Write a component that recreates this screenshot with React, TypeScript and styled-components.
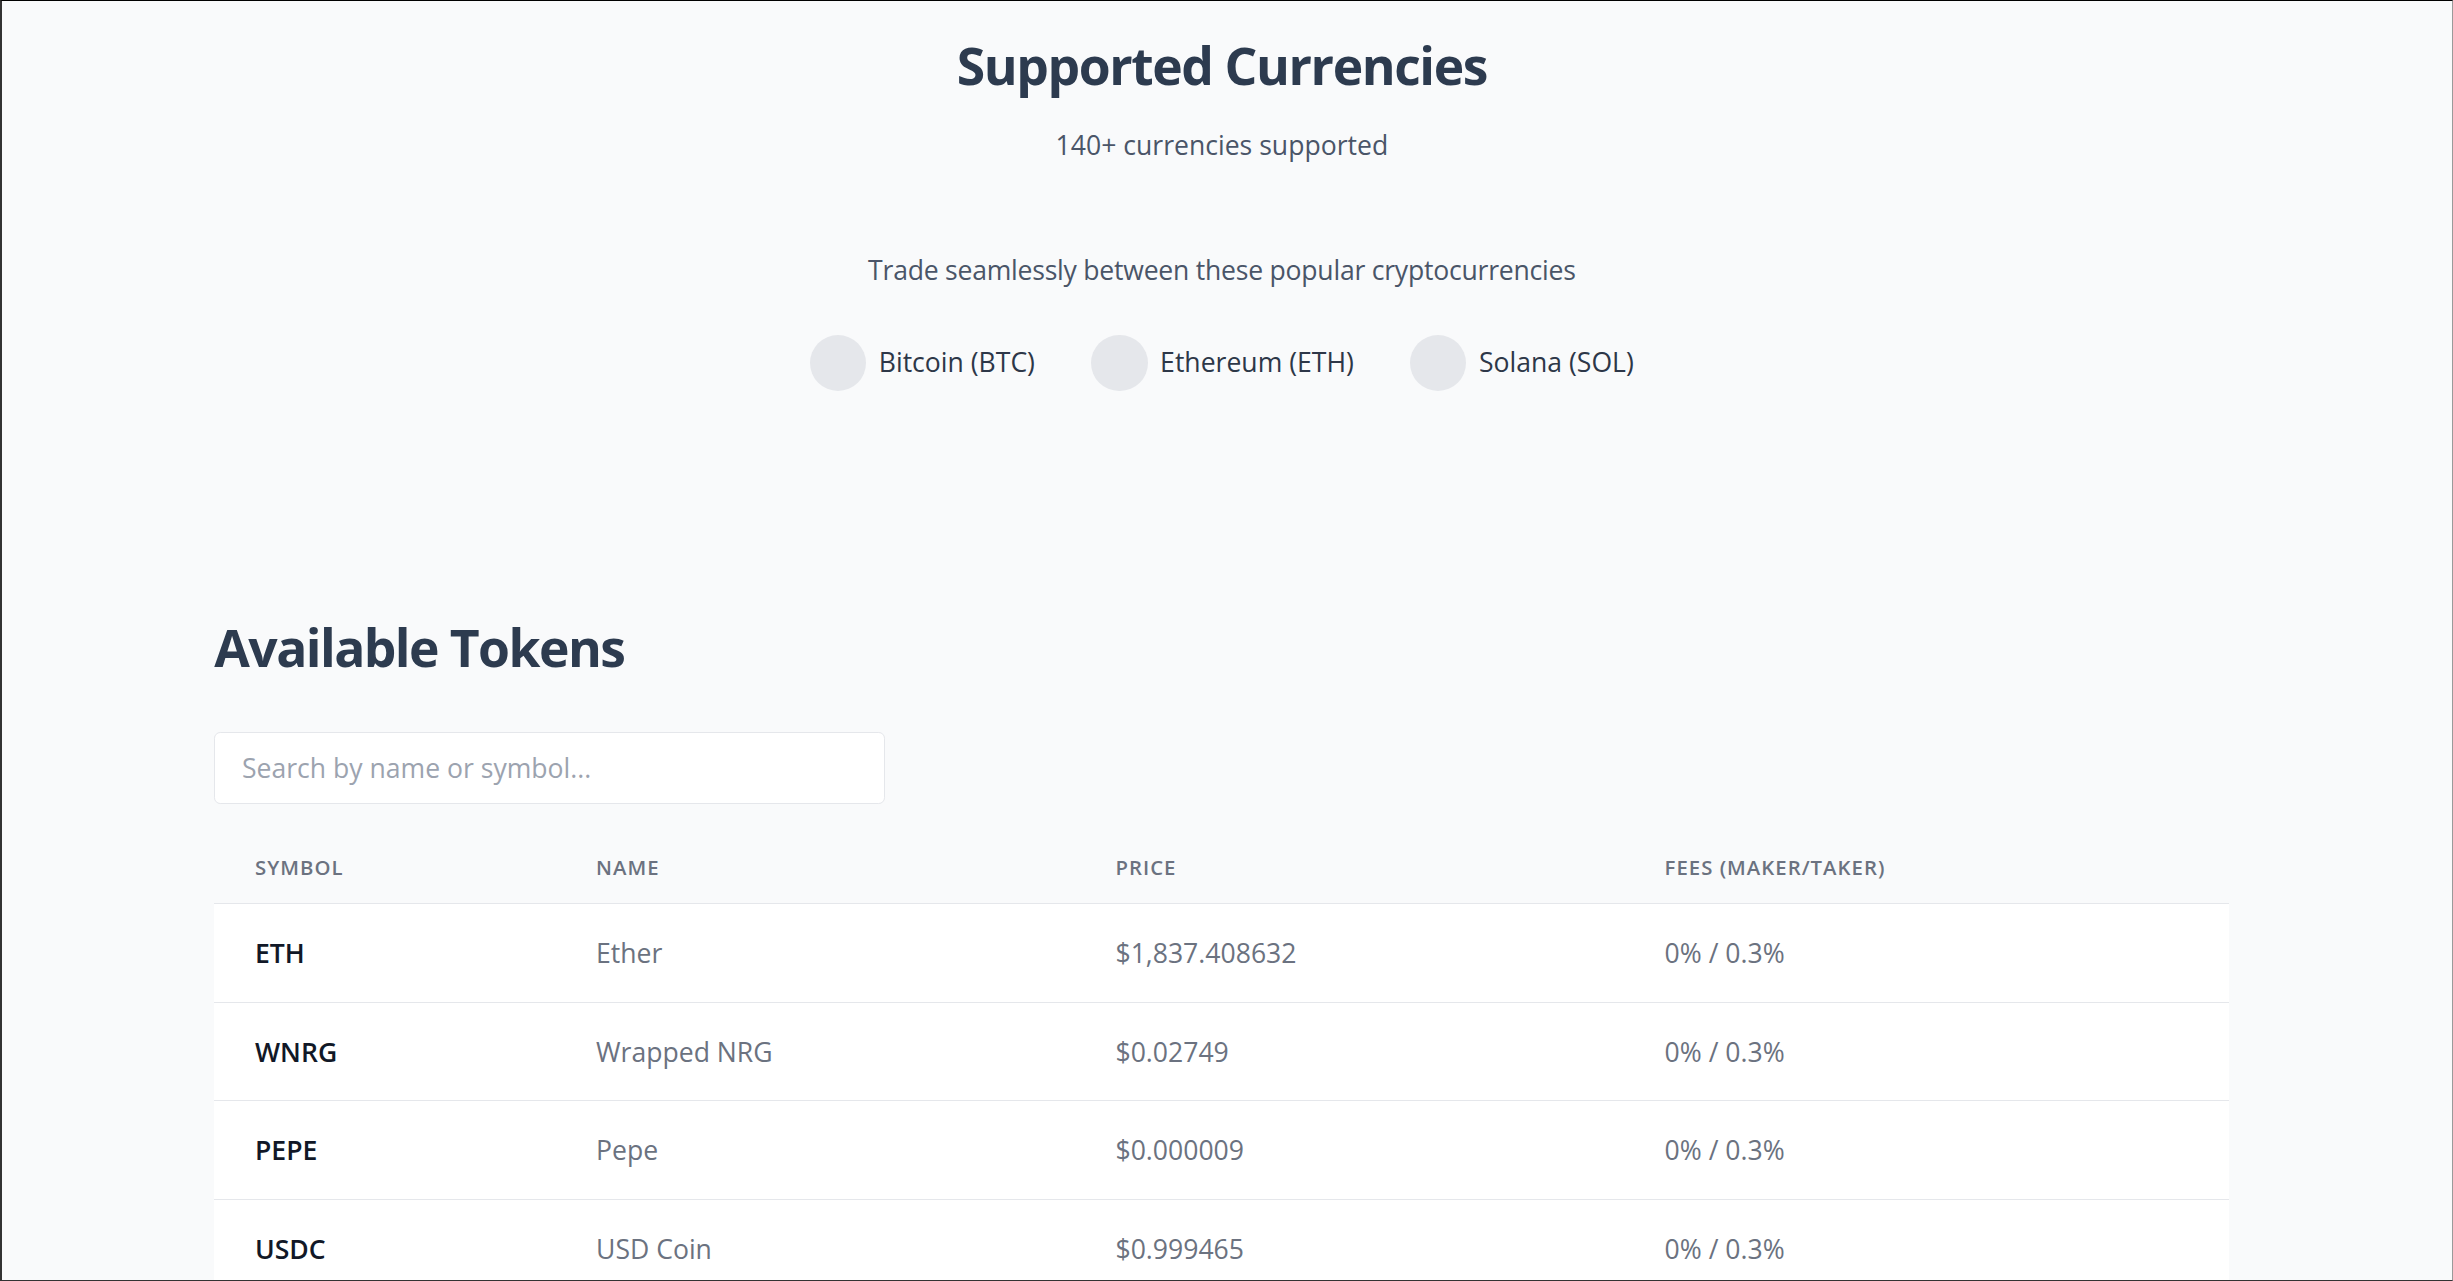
import React from "react";
import styled, { createGlobalStyle } from "styled-components";

const GlobalStyle = createGlobalStyle`
  html, body {
    margin: 0;
    padding: 0;
    background: #f9fafb;
  }
  body {
    font-family: "Open Sans", "Noto Sans", Arial, sans-serif;
    -webkit-font-smoothing: antialiased;
  }
  body::after {
    content: "";
    position: fixed;
    inset: 0;
    border-style: solid;
    border-width: 1px 1px 1px 2px;
    border-color: #000 #9a9a9a #333 #333;
    pointer-events: none;
    z-index: 10;
  }
`;

const Page = styled.div`
  zoom: 1.5645;
  width: 1562px;
  background: #f9fafb;
  color: #2d3748;
`;

const Hero = styled.section`
  display: flex;
  flex-direction: column;
  align-items: center;
  padding-top: 22px;
`;

const Title = styled.h1`
  margin: 0;
  font-size: 33px;
  line-height: 40px;
  font-weight: 700;
  color: #2d3b4f;
  letter-spacing: -0.9px;
`;

const Subtitle = styled.p`
  margin: 17px 0 0;
  font-size: 17px;
  line-height: 28px;
  color: #4a5568;
`;

const Lead = styled.p`
  margin: 52px 0 0;
  font-size: 17px;
  line-height: 28px;
  letter-spacing: -0.15px;
  color: #4a5568;
`;

const CoinRow = styled.div`
  display: flex;
  align-items: center;
  gap: 36px;
  margin-top: 27px;
`;

const Coin = styled.div`
  display: flex;
  align-items: center;
  gap: 8px;
  font-size: 17px;
  line-height: 28px;
  color: #2d3748;
`;

const CoinIcon = styled.span`
  width: 36px;
  height: 36px;
  border-radius: 50%;
  background: #e5e7eb;
  flex: none;
`;

const Tokens = styled.section`
  width: 1288px;
  margin: 144px 0 0 137px;
`;

const SectionTitle = styled.h2`
  margin: 0;
  font-size: 33px;
  line-height: 40px;
  font-weight: 700;
  color: #2d3b4f;
  letter-spacing: -1px;
`;

const Search = styled.input`
  display: block;
  box-sizing: border-box;
  width: 429px;
  height: 46px;
  margin-top: 34px;
  padding: 0 17px;
  border: 1px solid #e5e7eb;
  border-radius: 4px;
  background: #fff;
  font-family: inherit;
  font-size: 17px;
  color: #374151;
  outline: none;
  &::placeholder {
    color: #9ca3af;
  }
`;

const Table = styled.div`
  margin-top: 17px;
`;

const Row = styled.div<{ $head?: boolean }>`
  display: grid;
  grid-template-columns: 218px 332px 351px 1fr;
  align-items: center;
  height: ${(p) => (p.$head ? "47px" : "63px")};
  box-sizing: border-box;
  border-bottom: 1px solid #e5e7eb;
  background: ${(p) => (p.$head ? "transparent" : "#fff")};
`;

const HeadCell = styled.div`
  padding-left: 26px;
  font-size: 13px;
  font-weight: 600;
  letter-spacing: 0.05em;
  text-transform: uppercase;
  color: #6b7280;
`;

const Cell = styled.div<{ $strong?: boolean }>`
  padding-left: 26px;
  font-size: 17px;
  font-weight: ${(p) => (p.$strong ? 600 : 400)};
  color: ${(p) => (p.$strong ? "#111827" : "#6b7280")};
`;

const coins = ["Bitcoin (BTC)", "Ethereum (ETH)", "Solana (SOL)"];

const tokens = [
  { symbol: "ETH", name: "Ether", price: "$1,837.408632", fees: "0% / 0.3%" },
  { symbol: "WNRG", name: "Wrapped NRG", price: "$0.02749", fees: "0% / 0.3%" },
  { symbol: "PEPE", name: "Pepe", price: "$0.000009", fees: "0% / 0.3%" },
  { symbol: "USDC", name: "USD Coin", price: "$0.999465", fees: "0% / 0.3%" },
  { symbol: "USDT", name: "Tether USD", price: "$1.000128", fees: "0% / 0.3%" },
];

export default function App() {
  return (
    <>
      <GlobalStyle />
      <Page>
        <Hero>
          <Title>Supported Currencies</Title>
          <Subtitle>140+ currencies supported</Subtitle>
          <Lead>Trade seamlessly between these popular cryptocurrencies</Lead>
          <CoinRow>
            {coins.map((c) => (
              <Coin key={c}>
                <CoinIcon />
                {c}
              </Coin>
            ))}
          </CoinRow>
        </Hero>
        <Tokens>
          <SectionTitle>Available Tokens</SectionTitle>
          <Search placeholder="Search by name or symbol..." />
          <Table>
            <Row $head>
              <HeadCell>Symbol</HeadCell>
              <HeadCell>Name</HeadCell>
              <HeadCell>Price</HeadCell>
              <HeadCell>Fees (Maker/Taker)</HeadCell>
            </Row>
            {tokens.map((t) => (
              <Row key={t.symbol}>
                <Cell $strong>{t.symbol}</Cell>
                <Cell>{t.name}</Cell>
                <Cell>{t.price}</Cell>
                <Cell>{t.fees}</Cell>
              </Row>
            ))}
          </Table>
        </Tokens>
      </Page>
    </>
  );
}
